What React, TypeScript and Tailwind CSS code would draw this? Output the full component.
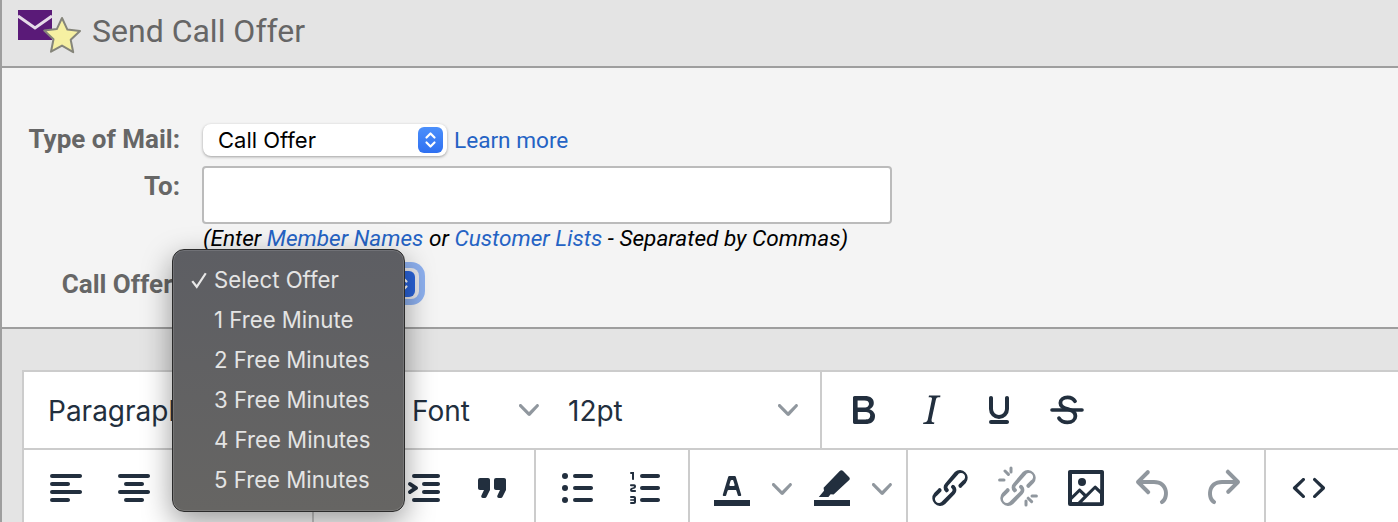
const ink = 'text-[#222f3e]';

function Icon({ d, muted, children }: { d?: string; muted?: boolean; children?: React.ReactNode }) {
  return (
    <span className={`w-[48px] h-[48px] shrink-0 ${muted ? 'text-[#222f3e]/50' : ink}`}>
      <svg viewBox="0 0 24 24" width="48" height="48" fill="currentColor">
        {d && <path d={d} />}
        {children}
      </svg>
    </span>
  );
}

function Chevron({ className }: { className?: string }) {
  return (
    <svg viewBox="0 0 10 10" width="20" height="20" fill="currentColor" className={`text-[#222f3e]/50 shrink-0 ${className ?? ''}`}>
      <path d="M8.7 2.2c.3-.3.8-.3 1 0 .4.4.4.9 0 1.2L5.7 7.8c-.3.3-.9.3-1.2 0L.2 3.4a.8.8 0 0 1 0-1.2c.3-.3.8-.3 1.1 0L5 6l3.7-3.8z" />
    </svg>
  );
}

function Stepper({ dark }: { dark?: boolean }) {
  return (
    <span className={`w-[25px] h-[26px] rounded-[6px] flex items-center justify-center ${dark ? 'bg-[#2a63d9]' : 'bg-gradient-to-b from-[#4b8ffb] to-[#2f70f1]'}`}>
      <svg viewBox="0 0 25 26" width="25" height="26" fill="none" stroke="#fff" strokeWidth="2.2" strokeLinecap="round" strokeLinejoin="round">
        <path d="M8.5 10.5l4-4 4 4M8.5 15.5l4 4 4-4" />
      </svg>
    </span>
  );
}

const paths = {
  alignLeft: 'M5 5h14c.6 0 1 .4 1 1s-.4 1-1 1H5a1 1 0 1 1 0-2zm0 4h8c.6 0 1 .4 1 1s-.4 1-1 1H5a1 1 0 1 1 0-2zm0 8h8c.6 0 1 .4 1 1s-.4 1-1 1H5a1 1 0 0 1 0-2zm0-4h14c.6 0 1 .4 1 1s-.4 1-1 1H5a1 1 0 0 1 0-2z',
  alignCenter: 'M5 5h14c.6 0 1 .4 1 1s-.4 1-1 1H5a1 1 0 1 1 0-2zm3 4h8c.6 0 1 .4 1 1s-.4 1-1 1H8a1 1 0 1 1 0-2zm0 8h8c.6 0 1 .4 1 1s-.4 1-1 1H8a1 1 0 0 1 0-2zm-3-4h14c.6 0 1 .4 1 1s-.4 1-1 1H5a1 1 0 0 1 0-2z',
  alignRight: 'M5 5h14c.6 0 1 .4 1 1s-.4 1-1 1H5a1 1 0 1 1 0-2zm6 4h8c.6 0 1 .4 1 1s-.4 1-1 1h-8a1 1 0 0 1 0-2zm0 8h8c.6 0 1 .4 1 1s-.4 1-1 1h-8a1 1 0 0 1 0-2zm-6-4h14c.6 0 1 .4 1 1s-.4 1-1 1H5a1 1 0 0 1 0-2z',
  justify: 'M5 5h14c.6 0 1 .4 1 1s-.4 1-1 1H5a1 1 0 1 1 0-2zm0 4h14c.6 0 1 .4 1 1s-.4 1-1 1H5a1 1 0 1 1 0-2zm0 4h14c.6 0 1 .4 1 1s-.4 1-1 1H5a1 1 0 0 1 0-2zm0 4h14c.6 0 1 .4 1 1s-.4 1-1 1H5a1 1 0 0 1 0-2z',
  indent: 'M7 5h12c.6 0 1 .4 1 1s-.4 1-1 1H7a1 1 0 1 1 0-2zm5 4h7c.6 0 1 .4 1 1s-.4 1-1 1h-7a1 1 0 0 1 0-2zm0 4h7c.6 0 1 .4 1 1s-.4 1-1 1h-7a1 1 0 0 1 0-2zm-5 4h12a1 1 0 0 1 0 2H7a1 1 0 0 1 0-2zm-2.6-3.8L6.2 12l-1.8-1.2a1 1 0 0 1 1.2-1.6l3 2a1 1 0 0 1 0 1.6l-3 2a1 1 0 1 1-1.2-1.6z',
  outdent: 'M7 5h12c.6 0 1 .4 1 1s-.4 1-1 1H7a1 1 0 1 1 0-2zm5 4h7c.6 0 1 .4 1 1s-.4 1-1 1h-7a1 1 0 0 1 0-2zm0 4h7c.6 0 1 .4 1 1s-.4 1-1 1h-7a1 1 0 0 1 0-2zm-5 4h12a1 1 0 0 1 0 2H7a1 1 0 0 1 0-2zm1.6-3.8a1 1 0 0 1-1.2 1.6l-3-2a1 1 0 0 1 0-1.6l3-2a1 1 0 0 1 1.2 1.6L6.8 12l1.8 1.2z',
  quote: 'M7.5 17h.9c.4 0 .7-.2.9-.6L11 13V8c0-.6-.4-1-1-1H6a1 1 0 0 0-1 1v4c0 .6.4 1 1 1h2l-1.3 2.7a1 1 0 0 0 .8 1.3zm8 0h.9c.4 0 .7-.2.9-.6L19 13V8c0-.6-.4-1-1-1h-4a1 1 0 0 0-1 1v4c0 .6.4 1 1 1h2l-1.3 2.7a1 1 0 0 0 .8 1.3z',
  numlist: 'M10 17h8c.6 0 1 .4 1 1s-.4 1-1 1h-8a1 1 0 0 1 0-2zm0-6h8c.6 0 1 .4 1 1s-.4 1-1 1h-8a1 1 0 0 1 0-2zm0-6h8c.6 0 1 .4 1 1s-.4 1-1 1h-8a1 1 0 1 1 0-2zM6 4v3.5c0 .3-.2.5-.5.5a.5.5 0 0 1-.5-.5V5h-.5a.5.5 0 0 1 0-1H6zm-1 8.8l.2.2h1.3c.3 0 .5.2.5.5s-.2.5-.5.5H4.9a1 1 0 0 1-.9-1V13c0-.4.3-.8.6-1l1.2-.4.2-.3a.2.2 0 0 0-.2-.2H4.5a.5.5 0 0 1-.5-.5c0-.3.2-.5.5-.5h1.6c.5 0 .9.4.9 1v.1c0 .4-.3.8-.6 1l-1.2.4-.2.3zM7 17v2c0 .6-.4 1-1 1H4.5a.5.5 0 0 1 0-1h1.2c.2 0 .3-.1.3-.3 0-.2-.1-.3-.3-.3H4.4a.4.4 0 1 1 0-.8h1.3c.2 0 .3-.1.3-.3 0-.2-.1-.3-.3-.3H4.5a.5.5 0 1 1 0-1H6c.6 0 1 .4 1 1z',
  bold: 'M7.8 19c-.3 0-.5 0-.6-.2l-.2-.5V5.7c0-.2 0-.4.2-.5l.6-.2h5c1.5 0 2.7.3 3.5 1 .7.6 1.1 1.4 1.1 2.5a3 3 0 0 1-.6 1.9c-.4.6-1 1-1.6 1.2.4.1.9.3 1.3.6s.8.7 1 1.2c.4.4.5 1 .5 1.6 0 1.3-.4 2.3-1.3 3-.8.7-2.1 1-3.8 1H7.8zm5-8.3c.6 0 1.2-.1 1.6-.5.4-.3.6-.7.6-1.3 0-1.1-.8-1.7-2.3-1.7H9.3v3.5h3.4zm.5 6c.7 0 1.3-.1 1.7-.4.4-.4.6-.9.6-1.5s-.2-1-.7-1.4c-.4-.3-1-.4-2-.4H9.4v3.8h4z',
  italic: 'M16.7 4.7l-.1.9h-.3c-.6 0-1 0-1.4.3-.3.3-.4.6-.5 1.1l-2.1 9.8v.6c0 .5.4.8 1.2.8h.2l-.2.8H8l.2-.8h.2c1.1 0 1.8-.5 2-1.5l2-9.8.1-.5c0-.6-.4-.8-1.4-.8h-.3l.2-.9h5.8z',
  underline: 'M16 5c.6 0 1 .4 1 1v5.5a5 5 0 0 1-10 0V6c0-.6.4-1 1-1s1 .4 1 1v5.5a3 3 0 0 0 6 0V6c0-.6.4-1 1-1zM8 17h8c.6 0 1 .4 1 1s-.4 1-1 1H8a1 1 0 0 1 0-2z',
  link: 'M6.2 12.3a1 1 0 0 1 1.4 1.4l-2 2a2 2 0 1 0 2.6 2.8l4.8-4.8a1 1 0 0 0 0-1.4 1 1 0 1 1 1.4-1.3 2.9 2.9 0 0 1 0 4L9.6 20a3.9 3.9 0 0 1-5.5-5.5l2-2zm11.6-.6a1 1 0 0 1-1.4-1.4l2-2a2 2 0 1 0-2.6-2.8L11 10.9a1 1 0 0 0 0 1.4A1 1 0 1 1 9.6 13.7a2.9 2.9 0 0 1 0-4L14.4 4a3.9 3.9 0 0 1 5.5 5.5l-2 2z',
  image: 'M5 15.7l3.3-3.2c.3-.3.7-.3 1 0L12 15l4.1-4c.3-.4.8-.4 1 0l2 1.9V5H5v10.7zM5 18V19h3l2.8-2.9-2-2L5 17.9zm14-3l-2.5-2.4-6.4 6.5H19v-4zM4 3h16c.6 0 1 .4 1 1v16c0 .6-.4 1-1 1H4a1 1 0 0 1-1-1V4c0-.6.4-1 1-1zm6 8a2 2 0 1 0 0-4 2 2 0 0 0 0 4z',
  undo: 'M6.4 8H12c3.7 0 6.2 2 6.8 5.1.6 2.7-.4 5.6-2.3 6.8a1 1 0 0 1-1-1.8c1.1-.6 1.8-2.7 1.4-4.6-.5-2.1-2.1-3.5-4.9-3.5H6.4l3.3 3.3a1 1 0 1 1-1.4 1.4l-5-5a1 1 0 0 1 0-1.4l5-5a1 1 0 0 1 1.4 1.4L6.4 8z',
  redo: 'M17.6 10H12c-2.8 0-4.4 1.4-4.9 3.5-.4 2 .3 4 1.4 4.6a1 1 0 1 1-1 1.8c-2-1.2-2.9-4.1-2.3-6.8.6-3 3-5.1 6.8-5.1h5.6l-3.3-3.3a1 1 0 1 1 1.4-1.4l5 5a1 1 0 0 1 0 1.4l-5 5a1 1 0 0 1-1.4-1.4l3.3-3.3z',
  source: 'M9.8 15.7c.3.3.3.8 0 1-.3.4-.9.4-1.2 0l-4.4-4.1a.8.8 0 0 1 0-1.2l4.4-4.2c.3-.3.9-.3 1.2 0 .3.3.3.8 0 1.1L6 12l3.8 3.7zM14.2 15.7c-.3.3-.3.8 0 1 .3.4.9.4 1.2 0l4.4-4.1c.3-.3.3-.9 0-1.2l-4.4-4.2a.8.8 0 0 0-1.2 0c-.3.3-.3.8 0 1.1L18 12l-3.8 3.7z',
  textColor: 'M3 18h18v3H3zM8.7 16h-.8a.5.5 0 0 1-.5-.6l2.7-9c.1-.3.3-.4.5-.4h2.8c.2 0 .4.1.5.4l2.7 9a.5.5 0 0 1-.5.6h-.8a.5.5 0 0 1-.4-.4l-.7-2.2c0-.3-.3-.4-.5-.4h-3.4c-.2 0-.4.1-.5.4l-.7 2.2c0 .3-.2.4-.4.4zm2.6-7.6l-.6 2a.5.5 0 0 0 .5.6h1.6a.5.5 0 0 0 .5-.6l-.6-2c0-.3-.3-.4-.5-.4h-.4c-.2 0-.4.1-.5.4z',
  highlight: 'M3 18h18v3H3zM17.400 3.400l3.200 3.200c.4.400.4 1 0 1.400l-7.800 7.300-1.500-.2-1.100 1.400H5.400l2.600-3.100-.2-1.500L16 3.400c.4-.4 1-.4 1.400 0z',
};

const menuItems = ['1 Free Minute', '2 Free Minutes', '3 Free Minutes', '4 Free Minutes', '5 Free Minutes'];

export default function App() {
  return (
    <div className="relative w-[1398px] h-[522px] overflow-hidden border-l-2 border-[#9e9e9e] bg-[#e4e4e4] font-['Roboto',sans-serif]">
      {/* Page heading */}
      <div className="h-[68px] border-b-2 border-[#9e9e9e] flex items-start pl-[14px]">
        <svg viewBox="0 0 70 56" width="70" height="56" className="mt-[8px] shrink-0">
          <rect x="2" y="2" width="34" height="30" fill="#5a1a78" />
          <path d="M2 8l17 12L36 8" fill="none" stroke="#e6dbe9" strokeWidth="3" />
          <path d="M46 10l5.4 11.6 12.6 1.5-9.3 8.6 2.5 12.5L46 37.6l-11 6.1 2.5-12.5-9.3-8.6 12.6-1.5z" fill="#f6f0a2" stroke="#85857a" strokeWidth="2" strokeLinejoin="round" />
        </svg>
        <h1 className="ml-[6px] mt-[11px] text-[32px] leading-[40px] text-[#666] font-normal">Send Call Offer</h1>
      </div>

      {/* Mail form */}
      <div className="h-[261px] border-b-2 border-[#9e9e9e] bg-[#f4f4f4] pt-[56px]">
        <div className="flex items-start">
          <label className="w-[178px] text-right text-[26px] leading-[30px] font-bold text-[#666]">Type of Mail:</label>
          <div className="ml-[23px] w-[244px] h-[32px] rounded-[8px] bg-white shadow-[0_1px_3px_rgba(0,0,0,0.35)] flex items-center justify-between pl-[15px] pr-[4px] font-['Inter',sans-serif] text-[22px] text-black">
            <span>Call Offer</span>
            <Stepper />
          </div>
          <a className="ml-[7px] text-[22.6px] leading-[34px] text-[#2563c4]">Learn more</a>
        </div>
        <div className="flex items-start mt-[8px]">
          <label className="w-[178px] text-right text-[26px] leading-[40px] font-bold text-[#666]">To:</label>
          <div className="ml-[22px]">
            <div className="w-[690px] h-[58px] rounded-[4px] border-2 border-[#bbb] bg-white" />
            <p className="ml-[1px] mt-[1px] text-[22.6px] leading-[28px] italic text-black whitespace-nowrap">
              (Enter <a className="text-[#2563c4]">Member Names</a> or <a className="text-[#2563c4]">Customer Lists</a> - Separated by Commas)
            </p>
          </div>
        </div>
        <div className="flex items-start mt-[15px]">
          <label className="w-[178px] text-right text-[26px] leading-[32px] font-bold text-[#666]">Call Offer:</label>
          <div className="ml-[23px] w-[216px] h-[31px] rounded-[8px] bg-[#e8e8ec] ring-[6px] ring-[#8eb1f0] flex items-center justify-end pr-[4px]">
            <Stepper dark />
          </div>
        </div>
      </div>

      {/* Editor toolbar */}
      <div className="pt-[41px] pl-[20px]">
        <div className={`bg-white border-l-2 border-t-2 border-[#ccc] ${ink}`}>
          <div className="h-[78px] border-b-2 border-[#ccc] flex font-['Inter',sans-serif] text-[28px]">
            <div className="w-[798px] h-full border-r-2 border-[#ccc] flex items-center pl-[24px]">
              <span className="w-[364px] pt-[2px]">Paragraph</span>
              <span className="w-[107px] pt-[2px]">Font</span>
              <Chevron />
              <span className="ml-[29px] w-[210px] pt-[2px]">12pt</span>
              <Chevron />
            </div>
            <div className="flex items-center pl-[17px] gap-[20px]">
              <Icon d={paths.bold} />
              <Icon d={paths.italic} />
              <Icon d={paths.underline} />
              <Icon>
                <path d="M4.500 11.100h15a.9.9 0 0 1 0 1.800h-15a.9.9 0 0 1 0-1.800z" />
                <path d="M16 7.600C15.200 6.300 13.900 5.700 12.300 5.700 10.200 5.700 8.700 6.800 8.700 8.500 8.700 10.300 10.500 11.100 12.500 11.600 14.700 12.200 16.200 13.100 16.200 15 16.200 16.900 14.500 18.200 12.200 18.200 10.300 18.200 8.800 17.400 8 16.100" fill="none" stroke="currentColor" strokeWidth="1.900" strokeLinecap="round" />
              </Icon>
            </div>
          </div>
          <div className="h-[72px] flex">
            <div className="w-[290px] h-full border-r-2 border-[#ccc] flex items-start pt-[14px] pl-[18px] gap-[20px]">
              <Icon d={paths.alignLeft} />
              <Icon d={paths.alignCenter} />
              <Icon d={paths.alignRight} />
              <Icon d={paths.justify} />
            </div>
            <div className="w-[222px] h-full border-r-2 border-[#ccc] flex items-start pt-[14px] pl-[18px] gap-[20px]">
              <Icon d={paths.outdent} />
              <Icon d={paths.indent} />
              <Icon d={paths.quote} />
            </div>
            <div className="w-[154px] h-full border-r-2 border-[#ccc] flex items-start pt-[14px] pl-[17px] gap-[21px]">
              <Icon>
                <path d="M11 5h8c.6 0 1 .4 1 1s-.4 1-1 1h-8a1 1 0 0 1 0-2zm0 6h8c.6 0 1 .4 1 1s-.4 1-1 1h-8a1 1 0 0 1 0-2zm0 6h8c.6 0 1 .4 1 1s-.4 1-1 1h-8a1 1 0 0 1 0-2z" />
                <circle cx="6" cy="6" r="1.500" />
                <circle cx="6" cy="12" r="1.500" />
                <circle cx="6" cy="18" r="1.500" />
              </Icon>
              <Icon d={paths.numlist} />
            </div>
            <div className="w-[218px] h-full border-r-2 border-[#ccc] flex items-start pt-[14px] pl-[18px]">
              <Icon d={paths.textColor} />
              <Chevron className="mt-[15px] ml-[16px] mr-[16px]" />
              <Icon d={paths.highlight} />
              <Chevron className="mt-[15px] ml-[16px]" />
            </div>
            <div className="w-[358px] h-full border-r-2 border-[#ccc] flex items-start pt-[14px] pl-[18px] gap-[20px]">
              <Icon d={paths.link} />
              <Icon muted>
                <path d={paths.link} />
                <path d="M5.500 3.500l1.700 1.700M2.800 8h2.200M18.800 18.800l-1.700-1.700M21.200 16h-2.200M16 20.500v-2M8.500 2v2" fill="none" stroke="currentColor" strokeWidth="1.500" strokeLinecap="round" />
              </Icon>
              <Icon d={paths.image} />
              <Icon d={paths.undo} muted />
              <Icon d={paths.redo} muted />
            </div>
            <div className="flex items-start pt-[14px] pl-[19px]">
              <Icon d={paths.source} />
            </div>
          </div>
        </div>
      </div>

      {/* Native select popup, lies over the form */}
      <div className="absolute left-[170px] top-[249px] w-[233px] h-[263px] rounded-[12px] border border-[#2b2b2b] bg-gradient-to-b from-[#5d5e63] to-[#666563] shadow-[inset_0_0_0_1px_rgba(255,255,255,0.12),0_10px_30px_rgba(0,0,0,0.4)] pt-[10px] font-['Inter',sans-serif] text-[22.2px] text-[#e4e4e4]">
        <div className="h-[40px] flex items-center">
          <svg viewBox="0 0 16 16" width="18" height="18" className="ml-[17px] mr-[6px] shrink-0" fill="none" stroke="#e8e8e8" strokeWidth="2">
            <path d="M2 9l4 5 8-12" />
          </svg>
          <span>Select Offer</span>
        </div>
        {menuItems.map(item => (
          <div key={item} className="h-[40px] flex items-center pl-[41px]">{item}</div>
        ))}
      </div>
    </div>
  );
}
